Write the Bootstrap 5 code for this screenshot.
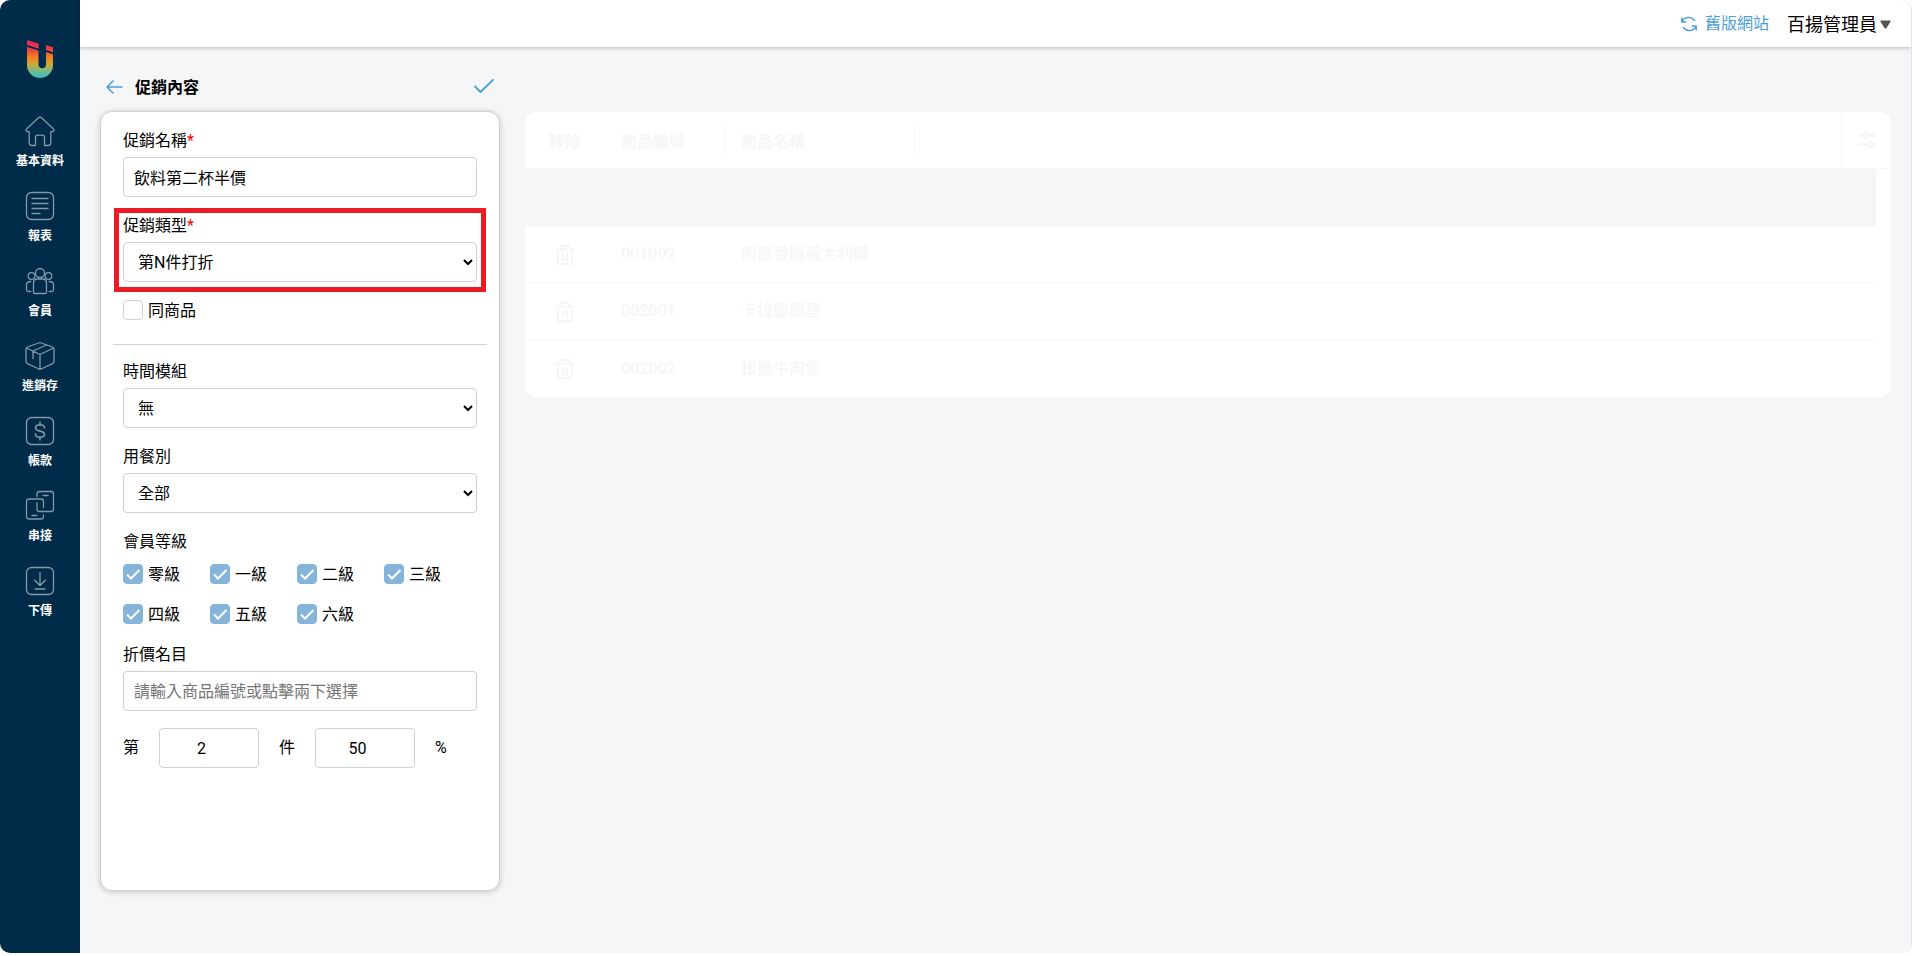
<!DOCTYPE html>
<html lang="zh-Hant">
<head>
<meta charset="utf-8">
<meta name="viewport" content="width=device-width, initial-scale=1">
<title>促銷內容</title>
<link rel="stylesheet" href="https://cdn.jsdelivr.net/npm/bootstrap@5.3.0/dist/css/bootstrap.min.css">
<style>
:root{--navy:#002b49;--blue:#4c9fd5;--line:#cfd0d2;--pale:#f4f6f8}
body{font-family:Roboto,"Noto Sans CJK TC",sans-serif;font-size:16px;line-height:24px;color:#000;background:#fff}
.shell{min-height:100vh;padding:0 1px 3px 0}
.frame{background:var(--pale);border-radius:10px;overflow:hidden;border-right:1px solid #e1e4e8}
.side{width:80px;background:var(--navy);padding-top:40px}
.side a{color:#fff;font-size:12px;font-weight:700;line-height:18px;text-decoration:none;height:75px}
.side a svg{margin-bottom:5px}
.brand{margin-bottom:35px}
.ico{fill:none;stroke:currentColor;stroke-linecap:round;stroke-linejoin:round}
.side .ico{stroke:#8199aa;stroke-width:1.3}
.topbar{height:47px;background:#fff;box-shadow:0 1px 4px rgba(0,0,0,.25);padding-right:20px;gap:18px}
.topbar a{color:var(--blue);text-decoration:none}
.user{font-size:18px;color:#000;border:0;background:none;padding:2px 0 0;gap:3px}
.work{padding:24px 20px 60px}
.left-col{width:400px}
.title-row{height:32px;padding:0 6px;margin-bottom:8px}
.title-row button,.icon-btn{border:0;background:none;padding:0;line-height:0;color:var(--blue)}
.title-row h1{font-size:16px;font-weight:700;line-height:24px;padding-top:2px}
.panel{min-height:780px;background:#fff;border:1px solid var(--line);border-radius:12px;box-shadow:0 1px 6px rgba(0,0,0,.2);padding:17px 22px}
.field{margin-bottom:17px}
.field .cap{display:block;margin-bottom:4px}
.star{color:#f00}
.box{height:40px;border:1px solid var(--line);border-radius:4px;background:#fff;color:#000;padding:0 10px;display:block}
.box::placeholder{color:#757575}
.marked{position:relative}
.marked::after{content:"";position:absolute;inset:-6px -9px -10px;border:5px solid #ed1c24;pointer-events:none}
.rule{margin:21px -10px 15px;border-top:1px solid var(--line);opacity:1}
.tick{appearance:none;width:20px;height:20px;margin:1px 0 0;border:1px solid var(--line);border-radius:4px;background:#fff}
.tick:checked{border-color:#84b4d9;background:#84b4d9 url("data:image/svg+xml,%3Csvg xmlns='http://www.w3.org/2000/svg' viewBox='0 0 18 18'%3E%3Cpath d='M3 9.5l4 4L15.500 5' fill='none' stroke='white' stroke-width='2'/%3E%3C/svg%3E")}
.tick-row{gap:5px;height:24px}
.levels{display:grid;grid-template-columns:repeat(4,87px);row-gap:16px;margin:9px 0 16px}
.count{width:100px;text-align:center;padding:0 15px 0 0}
.pay{gap:20px}
.right-col{margin-left:25px;padding-top:41px}
.goods{background:#fff;border-radius:12px;overflow:hidden;color:var(--pale)}
.goods .head{border-bottom:1px solid var(--pale)}
.goods table{table-layout:fixed;width:100%;font-weight:500;border-collapse:separate;border-spacing:0}
.goods th,.goods td{height:57px;padding:0;border-bottom:1px solid var(--pale)}
.goods th{font-weight:700;border:0;height:56px}
.goods .last td{border:0}
.goods .void td{background:var(--pale)}
.goods .code,.goods .item{padding-left:16px}
.goods .split{height:28px;border-right:1px solid var(--pale);display:flex;align-items:center;padding-top:3px}
.goods .bare{border-color:transparent}
.tool{width:50px;border-left:1px solid var(--pale)}
.goods .icon-btn{color:var(--pale)}
.goods .tool{border-left:1px solid var(--pale)}
.rows{padding-right:15px}
</style>
</head>
<body>
<div class="shell d-flex">
<div class="frame d-flex flex-grow-1">
<nav class="side d-flex flex-column align-items-center flex-shrink-0">
  <svg class="brand flex-shrink-0" width="28" height="40" viewBox="0 0 28 40" aria-label="logo">
    <defs><linearGradient id="g" x1="0" y1="0" x2="0" y2="38" gradientUnits="userSpaceOnUse"><stop offset="0" stop-color="#e81f63"/><stop offset=".26" stop-color="#ee4340"/><stop offset=".46" stop-color="#f5811f"/><stop offset=".66" stop-color="#c7ad3d"/><stop offset=".84" stop-color="#69bd93"/><stop offset="1" stop-color="#3fbdcb"/></linearGradient></defs>
    <path fill="url(#g)" d="M1 0L12.500 3.500V8.500L1 5zM20 5l7 2.300v5l-7-2.300zM1 7l11.500 3.500V25a3.800 3.800 0 0 0 7.500 0V12l7 2.300V25a13 13 0 0 1-26 0z"/>
  </svg>
  <a href="#" class="d-flex flex-column align-items-center"><svg class="ico" width="30" height="32" viewBox="0 0 30 32"><path d="M13.700 2.500L1.500 14c-1 1-.4 2.600 1 2.600h1.700v11.500c0 1.600.7 2.400 2.300 2.400h4v-8c0-1.500.8-2.400 2.300-2.400h4.400c1.500 0 2.300.9 2.300 2.400v8h4c1.600 0 2.300-.8 2.300-2.400V16.600h1.700c1.400 0 2-1.600 1-2.600L16.300 2.500c-.9-.8-1.700-.8-2.600 0z"/></svg>基本資料</a>
  <a href="#" class="d-flex flex-column align-items-center"><svg class="ico" width="30" height="32" viewBox="0 0 30 32"><rect x="1.500" y="2.500" width="27" height="27" rx="5"/><path d="M7 8.500h16M7 13.500h16M7 18.500h16M7 23.500h8"/></svg>報表</a>
  <a href="#" class="d-flex flex-column align-items-center"><svg class="ico" width="30" height="32" viewBox="0 0 30 32"><circle cx="15" cy="8" r="4.500"/><circle cx="6.500" cy="11" r="3.300"/><circle cx="23.500" cy="11" r="3.300"/><path d="M8.500 18c0-2.500 1.500-4 4-4h5c2.500 0 4 1.500 4 4v9c0 1-.5 1.500-1.500 1.500H10c-1 0-1.500-.5-1.500-1.500zM5.800 16.500c-2.700 0-4.300 1-4.300 3.300v5c0 1.200.5 1.700 1.700 1.700h2.600M24.200 16.500c2.700 0 4.300 1 4.300 3.300v5c0 1.200-.5 1.700-1.700 1.700h-2.600"/></svg>會員</a>
  <a href="#" class="d-flex flex-column align-items-center"><svg class="ico" width="30" height="32" viewBox="0 0 30 32"><path d="M15 2.500L2.500 7c-1 .4-1.500 1-1.500 2v12.500c0 1 .5 1.700 1.500 2.200L15 29.500l12.500-5.800c1-.5 1.500-1.200 1.500-2.200V9c0-1-.5-1.600-1.500-2zM1.500 8L15 14.500 28.500 8M15 14.500v15M8 11.500v7M8 11l13.500-6"/></svg>進銷存</a>
  <a href="#" class="d-flex flex-column align-items-center"><svg class="ico" width="30" height="32" viewBox="0 0 30 32"><rect x="1.500" y="2.500" width="27" height="27" rx="5"/><path stroke-width="1.600" d="M15 7v3M15 22v3M19.500 13c0-2-1.800-3.200-4.500-3.200s-4.500 1-4.500 3 1.800 2.700 4.500 3.300 4.500 1.200 4.500 3.200-1.800 3-4.500 3-4.500-1.200-4.500-3.300"/></svg>帳款</a>
  <a href="#" class="d-flex flex-column align-items-center"><svg class="ico" width="30" height="32" viewBox="0 0 30 32"><path d="M12 6.500V4c0-1.500.8-2.500 2.500-2.500H26c1.700 0 2.500.8 2.500 2.500v15c0 1.700-.8 2.500-2.500 2.500H14.500c-1.700 0-2.500-.8-2.500-2.500v-6M18 5.500h5M18.500 17.500v-6c0-1.700-.8-2.500-2.500-2.500H4c-1.700 0-2.500.8-2.500 2.500v15c0 1.700.8 2.500 2.500 2.500h12c1.700 0 2.500-.8 2.500-2.500V25M7 25.500h5"/></svg>串接</a>
  <a href="#" class="d-flex flex-column align-items-center"><svg class="ico" width="30" height="32" viewBox="0 0 30 32"><rect x="1.500" y="2.500" width="27" height="27" rx="5"/><path d="M15 7.500v13M9.500 15l5.500 5.500 5.500-5.500M10 24h10"/></svg>下傳</a>
</nav>
<div class="flex-grow-1 d-flex flex-column">
  <header class="topbar d-flex align-items-center justify-content-end">
    <a href="#" class="d-flex align-items-center"><svg class="ico me-2" width="16" height="16" viewBox="0 0 16 16" stroke-width="1.400"><path d="M.8 2v4h4M1 5.500C3.500.5 10 0 13.500 4.500M15.200 14v-4h-4M15 10.500C12.500 15.500 6 16 2.500 11.500"/></svg>舊版網站</a>
    <button type="button" class="user d-flex align-items-center">百揚管理員<svg width="11" height="9" viewBox="0 0 11 9"><path d="M1 .5h9q1 0 .6 1L6.500 8q-1 1.500-2 0L.4 1.500Q0 .5 1 .5z" fill="#555"/></svg></button>
  </header>
  <main class="work d-flex flex-grow-1 align-items-start">
    <section class="left-col flex-shrink-0">
      <div class="title-row d-flex align-items-center">
        <button type="button" aria-label="返回"><svg class="ico" width="17" height="16" viewBox="0 0 17 16" stroke-width="1.500"><path d="M16 8H1M7 2L1 8l6 6"/></svg></button>
        <h1 class="mb-0 ms-2 ps-1">促銷內容</h1>
        <button type="button" aria-label="儲存" class="ms-auto"><svg class="ico" width="20" height="16" viewBox="0 0 20 16" stroke-width="1.800"><path d="M1 7.500l5.500 5.500L19 .9"/></svg></button>
      </div>
      <form class="panel">
        <div class="field"><label class="cap" for="nm">促銷名稱<span class="star">*</span></label><input id="nm" class="box w-100" value="飲料第二杯半價"></div>
        <div class="field marked"><label class="cap" for="tp">促銷類型<span class="star">*</span></label><select id="tp" class="box w-100"><option>第N件打折</option></select></div>
        <div class="tick-row d-flex align-items-start"><input class="tick" type="checkbox" id="same"><label for="same">同商品</label></div>
        <hr class="rule">
        <div class="field"><label class="cap" for="tm">時間模組</label><select id="tm" class="box w-100"><option>無</option></select></div>
        <div class="field"><label class="cap" for="dn">用餐別</label><select id="dn" class="box w-100"><option>全部</option></select></div>
        <div>會員等級</div>
        <div class="levels">
          <div class="tick-row d-flex align-items-start"><input class="tick" type="checkbox" id="l0" checked><label for="l0">零級</label></div>
          <div class="tick-row d-flex align-items-start"><input class="tick" type="checkbox" id="l1" checked><label for="l1">一級</label></div>
          <div class="tick-row d-flex align-items-start"><input class="tick" type="checkbox" id="l2" checked><label for="l2">二級</label></div>
          <div class="tick-row d-flex align-items-start"><input class="tick" type="checkbox" id="l3" checked><label for="l3">三級</label></div>
          <div class="tick-row d-flex align-items-start"><input class="tick" type="checkbox" id="l4" checked><label for="l4">四級</label></div>
          <div class="tick-row d-flex align-items-start"><input class="tick" type="checkbox" id="l5" checked><label for="l5">五級</label></div>
          <div class="tick-row d-flex align-items-start"><input class="tick" type="checkbox" id="l6" checked><label for="l6">六級</label></div>
        </div>
        <div class="field"><label class="cap" for="ds">折價名目</label><input id="ds" class="box w-100" placeholder="請輸入商品編號或點擊兩下選擇"></div>
        <div class="pay d-flex align-items-center"><label for="q">第</label><input id="q" class="box count" value="2"><label for="p">件</label><input id="p" class="box count" value="50"><span>%</span></div>
      </form>
    </section>
    <section class="right-col flex-grow-1">
      <div class="goods">
        <div class="head d-flex">
          <table class="flex-grow-1"><colgroup><col style="width:80px"><col style="width:120px"><col style="width:190px"><col></colgroup>
            <thead><tr><th><div class="split bare justify-content-center">移除</div></th><th><div class="split code">商品編號</div></th><th><div class="split item">商品名稱</div></th><th></th></tr></thead></table>
          <button type="button" class="icon-btn tool flex-shrink-0" aria-label="欄位設定"><svg class="ico" width="20" height="18" viewBox="0 0 20 18" stroke-width="2.500"><path d="M1.500 4.500H5M10 4.500h8.500M1.500 13.500H11M16 13.500h2.500"/><circle cx="7.500" cy="4.500" r="2.200"/><circle cx="13.500" cy="13.500" r="2.200"/></svg></button>
        </div>
        <div class="rows">
          <table><colgroup><col style="width:80px"><col style="width:120px"><col style="width:190px"><col></colgroup>
          <tbody>
            <tr class="void"><td colspan="4"></td></tr>
            <tr><td class="text-center"><button type="button" class="icon-btn" aria-label="移除"><svg class="ico" width="20" height="22" viewBox="0 0 20 22" stroke-width="2"><path d="M1 5.500h18M6 5V2h8v3M3 6v14h14V6M8 9.500v7M12 9.500v7"/></svg></button></td><td class="code">001002</td><td class="item">肉醬香腸義大利麵</td><td></td></tr>
            <tr><td class="text-center"><button type="button" class="icon-btn" aria-label="移除"><svg class="ico" width="20" height="22" viewBox="0 0 20 22" stroke-width="2"><path d="M1 5.500h18M6 5V2h8v3M3 6v14h14V6M8 9.500v7M12 9.500v7"/></svg></button></td><td class="code">002001</td><td class="item">卡拉雞腿堡</td><td></td></tr>
            <tr class="last"><td class="text-center"><button type="button" class="icon-btn" aria-label="移除"><svg class="ico" width="20" height="22" viewBox="0 0 20 22" stroke-width="2"><path d="M1 5.500h18M6 5V2h8v3M3 6v14h14V6M8 9.500v7M12 9.500v7"/></svg></button></td><td class="code">002002</td><td class="item">松露牛肉堡</td><td></td></tr>
          </tbody></table>
        </div>
      </div>
    </section>
  </main>
</div>
</div>
</div>
<script src="https://cdn.jsdelivr.net/npm/bootstrap@5.3.0/dist/js/bootstrap.bundle.min.js"></script>
</body>
</html>
